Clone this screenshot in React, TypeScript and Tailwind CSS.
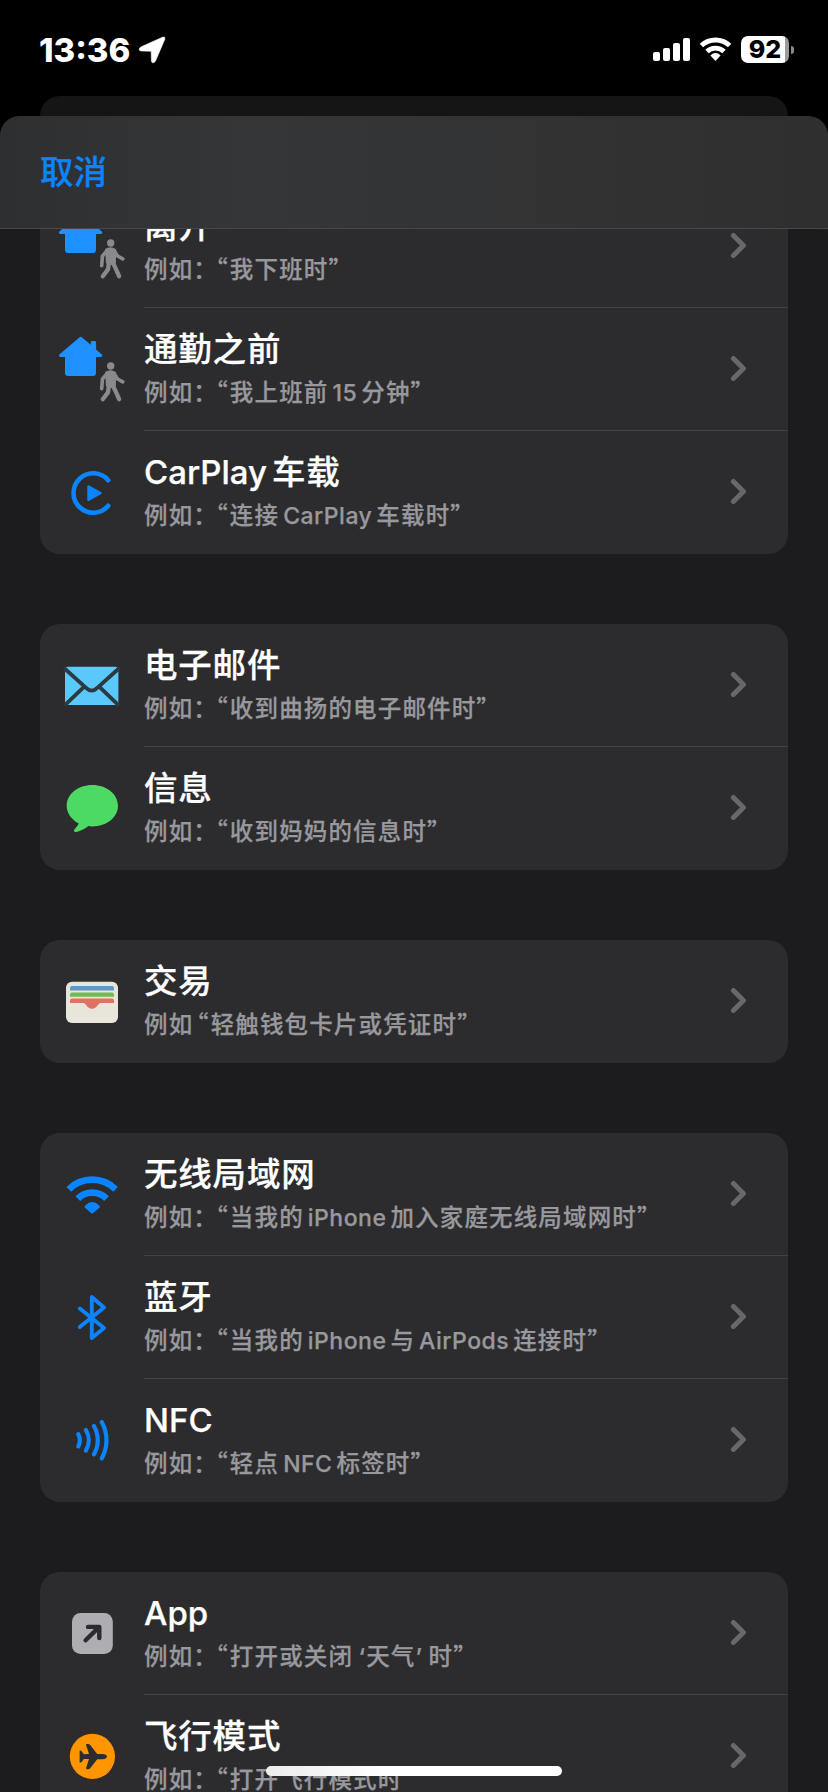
import React from "react";

interface Trigger {
  id: string;
  title: string;
  example: string;
  icon: React.ReactNode;
}

const FONT = "font-['Inter','Noto_Sans_CJK_SC',sans-serif]";

// Each row icon is drawn on the full 104x122 leading area of its row
function RowIcon({ children }: { children: React.ReactNode }) {
  return (
    <svg
      width="104"
      height="122"
      viewBox="0 0 104 122"
      fill="none"
      className="shrink-0"
    >
      {children}
    </svg>
  );
}

function HomeWalkIcon() {
  return (
    <RowIcon>
      <path
        d="M39.3 29.4a2 2 0 0 1 2.8 0L50.7 36.8V34.4a1.4 1.4 0 0 1 1.4-1.4h2.6a1.4 1.4 0 0 1 1.4 1.4V41.6L61.8 46.4a1.5 1.5 0 0 1-1 2.6H56V65a3 3 0 0 1-3 3H28a3 3 0 0 1-3-3V49H20.4a1.5 1.5 0 0 1-1-2.6Z"
        fill="#1e90ff"
      />
      <circle cx="70.7" cy="58" r="3.7" fill="#8a8a8d" />
      <path
        d="M66 64.6Q70.5 61.4 75.2 64.8L75 77.5Q71 80.5 66.8 77.5Z"
        fill="#8a8a8d"
        stroke="#8a8a8d"
        strokeWidth="1.8"
        strokeLinejoin="round"
      />
      <g
        stroke="#8a8a8d"
        strokeWidth="3.6"
        strokeLinecap="round"
        strokeLinejoin="round"
      >
        <path d="M67 65.6L62.4 71.2L61.7 80.6" />
        <path d="M74.4 66L77.6 71L82.8 73.8" />
        <path d="M69 77L68 84.4L62.8 91.2" strokeWidth="4.3" />
        <path d="M72.6 77L76 84.2L79.1 91.2" strokeWidth="4.3" />
      </g>
    </RowIcon>
  );
}

function CarPlayIcon() {
  return (
    <RowIcon>
      <path
        d="M68.2 49.2A19.7 19.7 0 1 0 68.2 74.8"
        stroke="#0a84ff"
        strokeWidth="4.6"
        strokeLinecap="round"
      />
      <path
        d="M48.3 55.2L60.8 62.1L48.3 69Z"
        fill="#0a84ff"
        stroke="#0a84ff"
        strokeWidth="2"
        strokeLinejoin="round"
      />
    </RowIcon>
  );
}

function MailIcon() {
  return (
    <RowIcon>
      <rect x="25" y="42.7" width="53.4" height="38.4" rx="3" fill="#5ac8fa" />
      <g stroke="#2c3a42" strokeWidth="3.8">
        <path d="M24 44L45.8 63.6Q51.7 69.6 57.6 63.6L79.4 44" />
        <path d="M24.4 81.6L44 62.8" />
        <path d="M79 81.6L59.4 62.8" />
      </g>
    </RowIcon>
  );
}

function MessageIcon() {
  return (
    <RowIcon>
      <path
        d="M52.3 38C66.6 38 78 47.2 78 58.8S66.6 79.4 52.3 79.4C50.8 79.4 49.6 79.3 48.4 79.1C45.2 81.6 40 84.9 35.6 84.9C34 84.9 33.4 83.6 34.4 82.4C36 80.6 38 78.6 38.7 76.5C31.4 72.6 26.7 66.2 26.7 58.8C26.7 47.2 38 38 52.3 38Z"
        fill="#4cd964"
      />
    </RowIcon>
  );
}

function WalletIcon() {
  return (
    <RowIcon>
      <rect x="26" y="41.7" width="52" height="41.2" rx="6" fill="#e8e6da" />
      <path d="M30 50.4V48a2 2 0 0 1 2-2H72a2 2 0 0 1 2 2V50.4Z" fill="#5a9bc9" />
      <path d="M30 56.8V54.4a2 2 0 0 1 2-2H72a2 2 0 0 1 2 2V56.8Z" fill="#72bb4c" />
      <path
        d="M30 63V60.6a2 2 0 0 1 2-2H72a2 2 0 0 1 2 2V63H61C57.6 63 57.4 68.7 52 68.7S46.4 63 43 63Z"
        fill="#e07263"
      />
    </RowIcon>
  );
}

function WifiRowIcon() {
  return (
    <RowIcon>
      <g stroke="#0a84ff" strokeWidth="6.8">
        <path d="M28.8 56.4A33 33 0 0 1 75.6 56.4" />
        <path d="M37.8 65.6A20.4 20.4 0 0 1 66.6 65.6" />
      </g>
      <path
        d="M45.2 72.4Q52.2 65.8 59.2 72.4Q60.6 73.6 59.4 74.8L53.6 79.8Q52.2 81 50.8 79.8L45 74.8Q43.8 73.6 45.2 72.4Z"
        fill="#0a84ff"
      />
    </RowIcon>
  );
}

function BluetoothIcon() {
  return (
    <RowIcon>
      <path
        d="M39.8 52.6L64 72L51.8 82V41L64 51.4L39.8 71"
        stroke="#0a84ff"
        strokeWidth="3.9"
        strokeLinecap="round"
        strokeLinejoin="round"
      />
    </RowIcon>
  );
}

function NfcIcon() {
  return (
    <RowIcon>
      <g stroke="#0a84ff" strokeWidth="4.2" strokeLinecap="round">
        <path d="M38.3 55.2A13 13 0 0 1 38.3 67.4" />
        <path d="M45.9 51A20 20 0 0 1 45.9 71.6" />
        <path d="M53.9 47A28 28 0 0 1 53.9 75.4" />
        <path d="M61.7 43A37 37 0 0 1 61.7 79.4" />
      </g>
    </RowIcon>
  );
}

function AppIcon() {
  return (
    <RowIcon>
      <rect x="32" y="41" width="40.8" height="41" rx="8.5" fill="#aeaeb2" />
      <g
        stroke="#2c2c2e"
        strokeWidth="4.4"
        strokeLinecap="round"
        strokeLinejoin="round"
      >
        <path d="M45.6 68.3L58.8 55.4" />
        <path d="M48 54.9H59.3V66" />
      </g>
    </RowIcon>
  );
}

function AirplaneIcon() {
  return (
    <RowIcon>
      <circle cx="52.4" cy="61.4" r="22.6" fill="#ff9500" />
      <path
        d="M67 61.6C67 60 64.8 59 62.6 59H57.2L50.4 50.2Q49.4 49 48 49H46.8Q45.8 49 46.1 50.1L49 59.1L43.8 59.3L41.6 56.3Q41.1 55.6 40.3 55.6Q39.6 55.6 39.6 56.5V66.7Q39.6 67.6 40.3 67.6Q41.1 67.6 41.6 66.9L43.8 63.9L49 64.1L46.1 73.1Q45.8 74.2 46.8 74.2H48Q49.4 74.2 50.4 73L57.2 64.2H62.6C64.8 64.2 67 63.2 67 61.6Z"
        fill="#2c2c2e"
      />
    </RowIcon>
  );
}

const groups: Trigger[][] = [
  [
    { id: "leave", title: "离开", example: "例如：“我下班时”", icon: <HomeWalkIcon /> },
    { id: "commute", title: "通勤之前", example: "例如：“我上班前15分钟”", icon: <HomeWalkIcon /> },
    { id: "carplay", title: "CarPlay车载", example: "例如：“连接CarPlay车载时”", icon: <CarPlayIcon /> },
  ],
  [
    { id: "mail", title: "电子邮件", example: "例如：“收到曲扬的电子邮件时”", icon: <MailIcon /> },
    { id: "message", title: "信息", example: "例如：“收到妈妈的信息时”", icon: <MessageIcon /> },
  ],
  [
    { id: "wallet", title: "交易", example: "例如 “轻触钱包卡片或凭证时”", icon: <WalletIcon /> },
  ],
  [
    { id: "wifi", title: "无线局域网", example: "例如：“当我的iPhone加入家庭无线局域网时”", icon: <WifiRowIcon /> },
    { id: "bluetooth", title: "蓝牙", example: "例如：“当我的iPhone与AirPods连接时”", icon: <BluetoothIcon /> },
    { id: "nfc", title: "NFC", example: "例如：“轻点NFC标签时”", icon: <NfcIcon /> },
  ],
  [
    { id: "app", title: "App", example: "例如：“打开或关闭 ‘天气’ 时”", icon: <AppIcon /> },
    { id: "airplane", title: "飞行模式", example: "例如：“打开飞行模式时”", icon: <AirplaneIcon /> },
  ],
];

// Latin words and digits get a little air when they sit next to Chinese text,
// double quotes take the round Chinese shape at half width
function MixedText({ text, latinClass }: { text: string; latinClass: string }) {
  return (
    <>
      {text.split(/([A-Za-z0-9]+|[“”])/).map((part, i) => {
        if (i % 2 === 0) return part;
        if (part === "“" || part === "”") {
          return (
            <span
              key={i}
              className={`font-['Noto_Sans_CJK_SC',sans-serif] [font-feature-settings:'halt'] ${
                part === "“" ? "-ml-[2px] mr-px" : ""
              }`}
            >
              {part}
            </span>
          );
        }
        return (
          <span key={i} className={latinClass}>
            {part}
          </span>
        );
      })}
    </>
  );
}

function TriggerRow({ trigger, last }: { trigger: Trigger; last: boolean }) {
  return (
    <div className="flex h-[123px]">
      {trigger.icon}
      <div
        className={`flex flex-1 items-center justify-between border-b pr-[41px] ${
          last ? "border-transparent" : "border-[#434346]"
        }`}
      >
        <div className="whitespace-nowrap">
          <div className="h-[47px] text-[33.5px] leading-[46px] font-medium tracking-[0.8px] text-white [-webkit-text-stroke:0.25px]">
            <MixedText
              text={trigger.title}
              latinClass="text-[33px] tracking-[0px] mr-[5px]"
            />
          </div>
          <div className="h-[39px] text-[23.5px] leading-[37px] font-medium tracking-[1.15px] text-[#98989d] [-webkit-text-stroke:0.25px] [word-spacing:-2px]">
            <MixedText
              text={trigger.example}
              latinClass="text-[23px] tracking-[0.5px] mx-[4px]"
            />
          </div>
        </div>
        <svg width="17" height="27" viewBox="0 0 17 27" fill="none" className="-mt-[2px]">
          <path
            d="M3.4 3.4L13.4 13.4L3.4 23.4"
            stroke="#68686b"
            strokeWidth="5"
            strokeLinecap="round"
            strokeLinejoin="round"
          />
        </svg>
      </div>
    </div>
  );
}

function StatusBar() {
  return (
    <div className="flex h-[96px] shrink-0 items-start justify-between pt-[36px] pr-[34px] pl-[39px]">
      <div className="flex items-start">
        <span className="w-[91px] text-[33px] leading-[28px] font-extrabold text-white">
          13:36
        </span>
        <svg width="28" height="28" viewBox="0 0 28 28" className="ml-[8px]">
          <path
            d="M24.6 1.2Q27.6 .2 26.8 3.2L17.6 24.8Q16.6 27 14.8 26.8Q13.4 26.6 13.4 24.6L13.2 15.2L3.4 15Q1.4 15 1.2 13.4Q1.2 11.8 3.2 10.8Z"
            fill="#fff"
            stroke="#fff"
            strokeWidth="0.6"
          />
        </svg>
      </div>
      <div className="flex items-start">
        <svg width="38" height="28" viewBox="0 0 38 28" fill="#fff">
          <rect x="0" y="16" width="7" height="9" rx="2" />
          <rect x="10" y="12" width="7" height="13" rx="2" />
          <rect x="20" y="7" width="7" height="18" rx="2" />
          <rect x="30" y="2" width="7" height="23" rx="2" />
        </svg>
        <svg width="33" height="28" viewBox="0 0 33 28" fill="none" className="ml-[8px]">
          <g stroke="#fff" strokeWidth="4.8">
            <path d="M2.4 9.6A20.5 20.5 0 0 1 30.6 9.6" />
            <path d="M8 15.4A12.4 12.4 0 0 1 25 15.4" />
          </g>
          <path d="M11.4 19.4Q16.5 14.8 21.6 19.4L16.5 25Z" fill="#fff" />
        </svg>
        <div className="ml-[9px] flex h-[27px] w-[48px] items-center justify-center rounded-[7px] bg-gradient-to-r from-white from-[92%] to-[#9a9a9a] to-[92%] text-[25px] leading-none font-extrabold text-black">
          92
        </div>
        <div className="mt-[10px] ml-[2px] h-[8px] w-[3px] rounded-r-full bg-[#8a8a8a]" />
      </div>
    </div>
  );
}

export default function App() {
  return (
    <div
      className={`relative flex h-[1792px] w-[828px] flex-col overflow-hidden bg-black ${FONT}`}
    >
      <StatusBar />

      {/* Sheet underneath */}
      <div className="mx-[40px] h-[20px] shrink-0 rounded-t-[20px] bg-[#151515]" />

      <div className="flex min-h-0 flex-1 flex-col overflow-hidden rounded-t-[20px] bg-[#1c1c1e]">
        <div className="flex h-[113px] shrink-0 items-center border-b border-[#48484a] bg-gradient-to-r from-[#2d2f31] via-[#353637] via-30% to-[#2f2f30] px-[40px]">
          <button className="text-[33.5px] leading-[46px] font-medium text-[#0a84ff] [-webkit-text-stroke:0.25px]">
            取消
          </button>
        </div>

        <div className="min-h-0 flex-1 overflow-hidden">
          <div className="-mt-[44px] flex flex-col gap-[70px] px-[40px]">
            {groups.map((group) => (
              <div key={group[0].id} className="rounded-[20px] bg-[#2c2c2e]">
                {group.map((trigger, i) => (
                  <TriggerRow
                    key={trigger.id}
                    trigger={trigger}
                    last={i === group.length - 1}
                  />
                ))}
              </div>
            ))}
          </div>
        </div>
      </div>

      {/* Home indicator */}
      <div className="absolute top-[1766px] left-[266px] h-[10px] w-[296px] rounded-full bg-gradient-to-r from-[#ececec] to-white to-40%" />
    </div>
  );
}
